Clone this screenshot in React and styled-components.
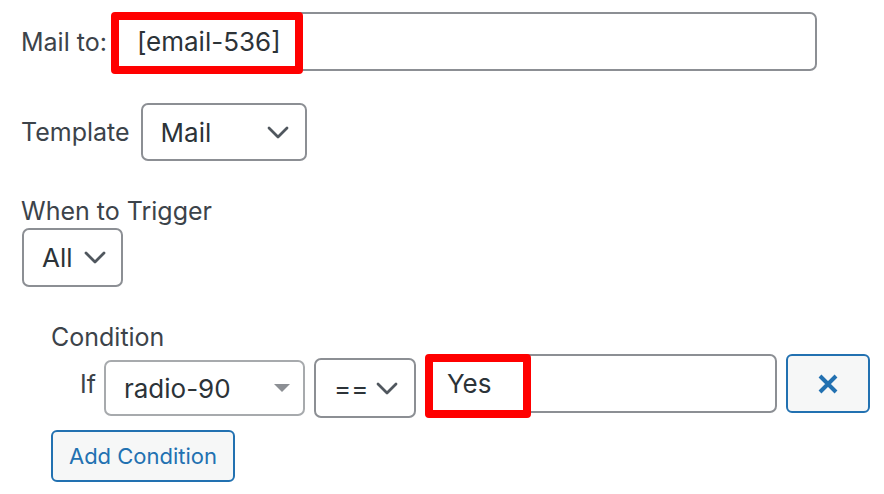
import React from "react";
import styled, { createGlobalStyle } from "styled-components";

const Global = createGlobalStyle`
  html, body { margin: 0; padding: 0; background: #fff; }
  body { font-family: Inter, "Noto Sans", "Liberation Sans", sans-serif; color: #3c434a; }
  * { box-sizing: border-box; }
`;

const Page = styled.div`
  padding: 12px 0 0 21px;
  width: 884px;
  height: 494px;
  overflow: hidden;
`;

const Row = styled.div`
  display: flex;
  align-items: ${(p) => p.$align || "center"};
  gap: ${(p) => p.$gap || 0}px;
  margin-top: ${(p) => p.$mt || 0}px;
`;

const Label = styled.label`
  font-size: 25px;
  line-height: 30px;
  color: #3c434a;
  white-space: nowrap;
  display: block;
`;

const Field = styled.div`
  position: relative;
  width: ${(p) => p.$w}px;
  height: ${(p) => p.$h}px;
  margin-top: ${(p) => p.$mt || 0}px;
  flex: none;
`;

const TextInput = styled.input`
  width: 100%;
  height: 100%;
  border: 2px solid #8c8f94;
  border-radius: 7px;
  background: #fff;
  font-family: inherit;
  font-size: 26px;
  color: #2c3338;
  padding: 0 0 0 ${(p) => p.$pl || 20}px;
  outline: none;
`;

const Highlight = styled.div`
  position: absolute;
  left: ${(p) => p.$l || 0}px;
  top: ${(p) => p.$t || 0}px;
  width: ${(p) => p.$w}px;
  height: ${(p) => p.$h}px;
  border: 8px solid #ff0000;
  border-radius: 4px;
  pointer-events: none;
`;

const SelectBox = styled.div`
  width: ${(p) => p.$w}px;
  height: ${(p) => p.$h}px;
  margin-top: ${(p) => p.$mt || 0}px;
  margin-left: ${(p) => p.$ml || 0}px;
  flex: none;
  display: flex;
  align-items: center;
  justify-content: space-between;
  padding: 0 ${(p) => p.$pr || 16}px 0 ${(p) => p.$pl || 18}px;
  border: 2px solid ${(p) => (p.$light ? "#a7aaad" : "#8c8f94")};
  border-radius: 7px;
  background: #fff;
  font-size: 26px;
  color: #2c3338;
`;

const Chevron = () => (
  <svg width="22" height="13" viewBox="0 0 22 13" fill="none">
    <path d="M2 2 L11 11 L20 2" stroke="#50575e" strokeWidth="2.8" strokeLinecap="round" strokeLinejoin="round" />
  </svg>
);

const Triangle = () => (
  <svg width="18" height="10" viewBox="0 0 18 10">
    <path d="M1 1 L17 1 L9 9 Z" fill="#8c8f94" />
  </svg>
);

const TriggerBlock = styled.div`
  margin-top: 35px;
`;

const ConditionBlock = styled.div`
  margin-left: 30px;
  margin-top: 35px;
`;

const IfLabel = styled.span`
  font-size: 25px;
  line-height: 30px;
  color: #3c434a;
  margin: 15px 0 0 29px;
  flex: none;
`;

const IconButton = styled.button`
  width: 84px;
  height: 59px;
  flex: none;
  border: 2px solid #2271b1;
  border-radius: 6px;
  background: #f6f7f7;
  display: flex;
  align-items: center;
  justify-content: center;
  padding: 0;
`;

const TextButton = styled.button`
  margin-top: 12px;
  width: 184px;
  height: 52px;
  border: 2px solid #2271b1;
  border-radius: 6px;
  background: #f6f7f7;
  color: #2271b1;
  font-family: inherit;
  font-size: 22px;
  padding: 0;
  display: block;
`;

export default function App() {
  return (
    <>
      <Global />
      <Page>
        <Row $gap={5}>
          <Label>Mail to:</Label>
          <Field $w={705} $h={59}>
            <TextInput defaultValue="[email-536]" $pl={23} readOnly />
            <Highlight $l={-1} $w={192} $h={62} />
          </Field>
        </Row>

        <Row $gap={11} $mt={32}>
          <Label>Template</Label>
          <SelectBox $w={166} $h={58}>
            <span>Mail</span>
            <Chevron />
          </SelectBox>
        </Row>

        <TriggerBlock>
          <Label>When to Trigger</Label>
          <SelectBox $w={101} $h={59} $pl={18} $pr={15} $mt={2} $ml={1}>
            <span>All</span>
            <Chevron />
          </SelectBox>
        </TriggerBlock>

        <ConditionBlock>
          <Label>Condition</Label>
          <Row $align="flex-start" $gap={9} $mt={2}>
            <IfLabel>If</IfLabel>
            <SelectBox $w={201} $h={56} $mt={6} $ml={-1} $light $pr={12}>
              <span>radio-90</span>
              <Triangle />
            </SelectBox>
            <SelectBox $w={102} $h={60} $mt={4} $pl={18} $pr={16}>
              <span>==</span>
              <Chevron />
            </SelectBox>
            <Field $w={352} $h={59}>
              <TextInput defaultValue="Yes" $pl={20} readOnly />
              <Highlight $w={106} $h={64} />
            </Field>
            <IconButton aria-label="Remove">
              <svg width="22" height="22" viewBox="0 0 22 22">
                <path d="M3 3 L19 19 M19 3 L3 19" stroke="#2271b1" strokeWidth="4" strokeLinecap="butt" />
              </svg>
            </IconButton>
          </Row>
          <TextButton>Add Condition</TextButton>
        </ConditionBlock>
      </Page>
    </>
  );
}
